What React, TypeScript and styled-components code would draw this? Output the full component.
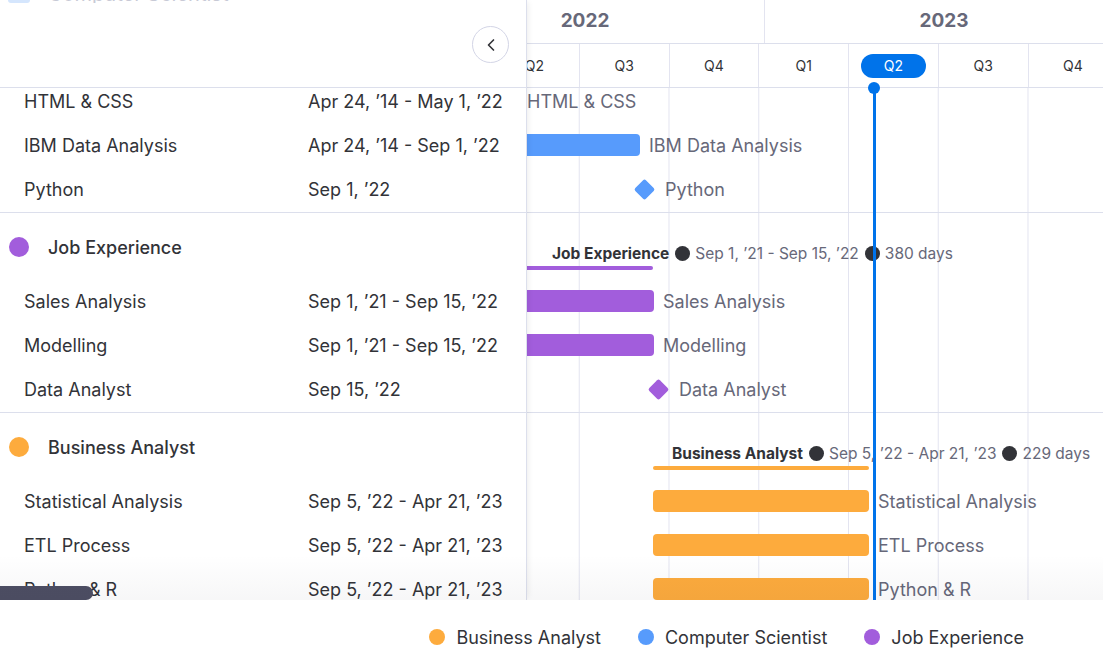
import * as React from "react";
import styled, { createGlobalStyle } from "styled-components";
import { ChevronLeft } from "lucide-react";

const LINE = "#dcdfec";
const GRID = "#e3e4f0";
const TEXT = "#323338";
const MUTED = "#676879";
const BLUE = "#0073ea";
const QW = 89.75;
const TODAY = 347;

const GlobalStyle = createGlobalStyle`
  html, body {
    margin: 0;
    padding: 0;
    background: #ffffff;
    overflow: hidden;
  }
  body {
    font-family: Inter, "Liberation Sans", Arial, sans-serif;
    color: ${TEXT};
  }
`;

const Page = styled.div`
  width: 1103px;
  height: 664px;
  display: flex;
  flex-direction: column;
  background: #fff;
`;

const Main = styled.div`
  position: relative;
  height: 600px;
  display: flex;
  overflow: hidden;
`;

const Fade = styled.div`
  position: absolute;
  left: 0;
  right: 0;
  bottom: 0;
  height: 46px;
  background: linear-gradient(to bottom, rgba(0, 0, 0, 0), rgba(20, 20, 40, 0.035));
  pointer-events: none;
  z-index: 3;
`;

const LeftPanel = styled.div`
  position: relative;
  z-index: 2;
  width: 527px;
  flex: none;
  box-sizing: border-box;
  display: flex;
  flex-direction: column;
  background: #fff;
  border-right: 1px solid ${LINE};
  box-shadow: 3px 0 6px -2px rgba(0, 0, 0, 0.08);
`;

const LeftHeader = styled.div`
  height: 88px;
  flex: none;
  box-sizing: border-box;
  border-bottom: 1px solid ${LINE};
  display: flex;
  flex-direction: column;
`;

const Ghost = styled.div`
  height: 3px;
  overflow: hidden;
  flex: none;
`;

const GhostInner = styled.div`
  margin-top: -16px;
  height: 19px;
  display: flex;
  align-items: center;
  padding-left: 8px;
  font-size: 20px;
  color: #c8cad6;
  white-space: nowrap;
`;

const GhostIcon = styled.span`
  width: 22px;
  height: 19px;
  border-radius: 3px;
  background: #d5e6fd;
  margin-right: 18px;
`;

const HeaderActions = styled.div`
  flex: 1;
  display: flex;
  align-items: center;
  justify-content: flex-end;
  padding-right: 17px;
  padding-bottom: 1px;
`;

const CollapseButton = styled.button`
  width: 37px;
  height: 37px;
  border-radius: 50%;
  border: 1px solid #d3d5e6;
  background: #fff;
  display: flex;
  align-items: center;
  justify-content: center;
  padding: 0;
  color: ${TEXT};
  cursor: pointer;
`;

const Body = styled.div`
  position: relative;
  flex: 1;
  overflow: hidden;
`;

const Scrolled = styled.div`
  margin-top: -75px;
`;

const TimelineBody = styled(Body)`
  background-image: linear-gradient(to right, ${GRID} 1px, transparent 1px);
  background-size: ${QW}px 100%;
  background-position: -38px 0;
`;

const Section = styled.div`
  padding-bottom: 1px;
  border-bottom: 1px solid ${LINE};
`;

const LeftGroupRow = styled.div`
  height: 66px;
  box-sizing: border-box;
  display: flex;
  align-items: center;
  padding: 2px 0 0 9px;
  font-size: 18px;
  font-weight: 500;
  color: ${TEXT};
`;

const Dot = styled.span<{ $color: string; $size: number }>`
  width: ${(p) => p.$size}px;
  height: ${(p) => p.$size}px;
  border-radius: 50%;
  background: ${(p) => p.$color};
  flex: none;
`;

const GroupName = styled.span`
  margin-left: 19px;
`;

const LeftItemRow = styled.div`
  height: 44px;
  display: flex;
  align-items: center;
  padding-left: 24px;
  font-size: 18px;
  color: ${TEXT};
  white-space: nowrap;
`;

const ItemName = styled.span`
  width: 284px;
  flex: none;
`;

const ScrollThumb = styled.div`
  position: absolute;
  left: -12px;
  bottom: 0;
  width: 105px;
  height: 14px;
  border-radius: 7px;
  background: #4d4e63;
  z-index: 4;
`;

const TimelinePanel = styled.div`
  position: relative;
  flex: 1;
  display: flex;
  flex-direction: column;
  overflow: hidden;
`;

const HeaderRow = styled.div`
  height: 44px;
  flex: none;
  box-sizing: border-box;
  border-bottom: 1px solid ${LINE};
  overflow: hidden;
`;

const Track = styled.div<{ $offset: number }>`
  display: flex;
  height: 100%;
  margin-left: ${(p) => p.$offset}px;
`;

const YearCell = styled.div`
  width: 359px;
  flex: none;
  box-sizing: border-box;
  border-right: 1px solid ${GRID};
  display: flex;
  align-items: center;
  justify-content: center;
  font-size: 19px;
  font-weight: 700;
  color: ${MUTED};
  padding-bottom: 3px;
`;

const QuarterCell = styled.div`
  width: ${QW}px;
  flex: none;
  box-sizing: border-box;
  border-right: 1px solid ${GRID};
  display: flex;
  align-items: center;
  justify-content: center;
`;

const QuarterLabel = styled.span<{ $active?: boolean }>`
  display: flex;
  align-items: center;
  justify-content: center;
  width: 65px;
  height: 24px;
  border-radius: 12px;
  font-size: 14px;
  color: ${(p) => (p.$active ? "#fff" : TEXT)};
  background: ${(p) => (p.$active ? BLUE : "transparent")};
`;

const TodayLine = styled.div`
  position: absolute;
  top: 88px;
  bottom: 0;
  left: ${TODAY - 1.5}px;
  width: 3px;
  background: ${BLUE};
  z-index: 1;

  &::before {
    content: "";
    position: absolute;
    top: -6px;
    left: -4.5px;
    width: 12px;
    height: 12px;
    border-radius: 50%;
    background: ${BLUE};
  }
`;

const GanttGroupRow = styled.div`
  height: 66px;
  box-sizing: border-box;
  padding-top: 31px;
  display: flex;
  flex-direction: column;
  align-items: flex-start;
  white-space: nowrap;
`;

const Summary = styled.div`
  height: 18px;
  display: flex;
  align-items: center;
  font-size: 15.5px;
  color: ${MUTED};
`;

const SummaryTitle = styled.span`
  font-weight: 700;
  color: ${TEXT};
`;

const SummaryDot = styled.span`
  width: 15px;
  height: 15px;
  border-radius: 50%;
  background: ${TEXT};
  margin: 0 5px 0 6px;
  flex: none;
`;

const GroupLine = styled.div<{ $color: string }>`
  height: 4px;
  border-radius: 2px;
  margin-top: 4px;
  flex: none;
  background: ${(p) => p.$color};
`;

const GanttItemRow = styled.div`
  height: 44px;
  display: flex;
  align-items: center;
  white-space: nowrap;
`;

const Bar = styled.div<{ $color: string }>`
  height: 22px;
  border-radius: 4px;
  flex: none;
  background: ${(p) => p.$color};
`;

const Diamond = styled.div<{ $color: string }>`
  width: 15px;
  height: 15px;
  border-radius: 2px;
  flex: none;
  transform: rotate(45deg);
  background: ${(p) => p.$color};
`;

const BarLabel = styled.span<{ $gap: number }>`
  margin-left: ${(p) => p.$gap}px;
  font-size: 18px;
  color: ${MUTED};
`;

const Legend = styled.div`
  height: 64px;
  box-sizing: border-box;
  padding: 10px 79px 0 0;
  display: flex;
  align-items: center;
  justify-content: flex-end;
  gap: 37px;
`;

const LegendItem = styled.div`
  display: flex;
  align-items: center;
  gap: 11px;
  font-size: 18px;
  color: ${TEXT};
`;

type Item = {
  name: string;
  dates: string;
  start?: number;
  end?: number;
  at?: number;
};

type Group = {
  name: string;
  color: string;
  summary: { labelAt: number; range: string; days: string; start: number; end: number };
  items: Item[];
};

const groups: Group[] = [
  {
    name: "Computer Scientist",
    color: "#579bfc",
    summary: { labelAt: 25, range: "Apr 24, ’14 - Sep 1, ’22", days: "3052 days", start: -500, end: 113 },
    items: [
      { name: "HTML & CSS", dates: "Apr 24, ’14 - May 1, ’22", start: -500, end: -9 },
      { name: "IBM Data Analysis", dates: "Apr 24, ’14 - Sep 1, ’22", start: -500, end: 113 },
      { name: "Python", dates: "Sep 1, ’22", at: 117 },
    ],
  },
  {
    name: "Job Experience",
    color: "#a25ddc",
    summary: { labelAt: 25, range: "Sep 1, ’21 - Sep 15, ’22", days: "380 days", start: -500, end: 126 },
    items: [
      { name: "Sales Analysis", dates: "Sep 1, ’21 - Sep 15, ’22", start: -500, end: 127 },
      { name: "Modelling", dates: "Sep 1, ’21 - Sep 15, ’22", start: -500, end: 127 },
      { name: "Data Analyst", dates: "Sep 15, ’22", at: 131 },
    ],
  },
  {
    name: "Business Analyst",
    color: "#fdab3d",
    summary: { labelAt: 145, range: "Sep 5, ’22 - Apr 21, ’23", days: "229 days", start: 126, end: 342 },
    items: [
      { name: "Statistical Analysis", dates: "Sep 5, ’22 - Apr 21, ’23", start: 126, end: 342 },
      { name: "ETL Process", dates: "Sep 5, ’22 - Apr 21, ’23", start: 126, end: 342 },
      { name: "Python & R", dates: "Sep 5, ’22 - Apr 21, ’23", start: 126, end: 342 },
    ],
  },
];

const quarters = ["Q2", "Q3", "Q4", "Q1", "Q2", "Q3", "Q4", "Q1"];
const activeQuarter = 4;

const legend = [
  { name: "Business Analyst", color: "#fdab3d" },
  { name: "Computer Scientist", color: "#579bfc" },
  { name: "Job Experience", color: "#a25ddc" },
];

const GanttItem = ({ item, color }: { item: Item; color: string }) => {
  if (item.at !== undefined) {
    return (
      <GanttItemRow>
        <Diamond $color={color} style={{ marginLeft: item.at - 7.5 }} />
        <BarLabel $gap={13.5}>{item.name}</BarLabel>
      </GanttItemRow>
    );
  }
  const start = item.start ?? 0;
  const end = item.end ?? 0;
  return (
    <GanttItemRow>
      <Bar $color={color} style={{ marginLeft: start, width: end - start }} />
      <BarLabel $gap={9}>{item.name}</BarLabel>
    </GanttItemRow>
  );
};

const App = () => {
  return (
    <Page>
      <GlobalStyle />
      <Main>
        <LeftPanel>
          <LeftHeader>
            <Ghost>
              <GhostInner>
                <GhostIcon />
                Computer Scientist
              </GhostInner>
            </Ghost>
            <HeaderActions>
              <CollapseButton aria-label="Collapse">
                <ChevronLeft size={20} strokeWidth={2} />
              </CollapseButton>
            </HeaderActions>
          </LeftHeader>
          <Body>
            <Scrolled>
              {groups.map((g) => (
                <Section key={g.name}>
                  <LeftGroupRow>
                    <Dot $color={g.color} $size={20} />
                    <GroupName>{g.name}</GroupName>
                  </LeftGroupRow>
                  {g.items.map((it) => (
                    <LeftItemRow key={it.name}>
                      <ItemName>{it.name}</ItemName>
                      <span>{it.dates}</span>
                    </LeftItemRow>
                  ))}
                </Section>
              ))}
            </Scrolled>
          </Body>
          <ScrollThumb />
        </LeftPanel>

        <TimelinePanel>
          <HeaderRow>
            <Track $offset={-121}>
              <YearCell>2022</YearCell>
              <YearCell>2023</YearCell>
            </Track>
          </HeaderRow>
          <HeaderRow>
            <Track $offset={-37}>
              {quarters.map((q, i) => (
                <QuarterCell key={i}>
                  <QuarterLabel $active={i === activeQuarter}>{q}</QuarterLabel>
                </QuarterCell>
              ))}
            </Track>
          </HeaderRow>
          <TimelineBody>
            <Scrolled>
              {groups.map((g) => (
                <Section key={g.name}>
                  <GanttGroupRow>
                    <Summary style={{ marginLeft: g.summary.labelAt }}>
                      <SummaryTitle>{g.name}</SummaryTitle>
                      <SummaryDot />
                      {g.summary.range}
                      <SummaryDot />
                      {g.summary.days}
                    </Summary>
                    <GroupLine
                      $color={g.color}
                      style={{ marginLeft: g.summary.start, width: g.summary.end - g.summary.start }}
                    />
                  </GanttGroupRow>
                  {g.items.map((it) => (
                    <GanttItem key={it.name} item={it} color={g.color} />
                  ))}
                </Section>
              ))}
            </Scrolled>
          </TimelineBody>
          <TodayLine />
        </TimelinePanel>
        <Fade />
      </Main>

      <Legend>
        {legend.map((l) => (
          <LegendItem key={l.name}>
            <Dot $color={l.color} $size={16} />
            {l.name}
          </LegendItem>
        ))}
      </Legend>
    </Page>
  );
};

export default App;
